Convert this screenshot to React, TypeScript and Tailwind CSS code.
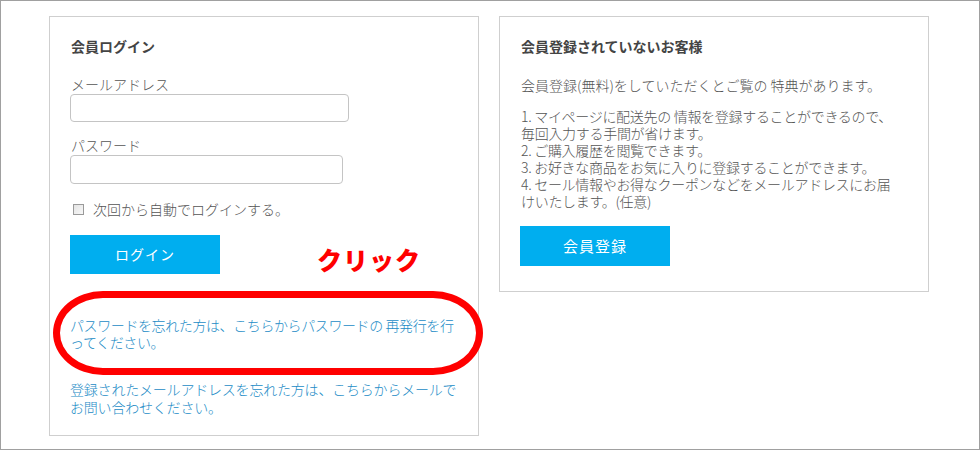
const font = { fontFamily: '"Noto Sans CJK JP", "Noto Sans", sans-serif' };

const benefits = [
  '1. マイページに配送先の 情報を登録することができるので、',
  '毎回入力する手間が省けます。',
  '2. ご購入履歴を閲覧できます。',
  '3. お好きな商品をお気に入りに登録することができます。',
  '4. セール情報やお得なクーポンなどをメールアドレスにお届',
  'けいたします。(任意)',
];

export default function App() {
  return (
    <div
      className="relative w-[980px] h-[450px] border border-[#a0a0a0] bg-white pl-[48px] pt-[15px] flex items-start gap-[20px] text-[#555] overflow-hidden"
      style={font}
    >
      {/* LOGIN */}
      <div className="w-[430px] h-[420px] border border-[#cfcfcf] px-[21px] pt-[19px] flex flex-col">
        <h2 className="text-[14px] leading-[20px] font-bold text-[#444]">会員ログイン</h2>

        <label className="mt-[18px] text-[14px] leading-[20px] font-light">メールアドレス</label>
        <div className="-ml-px w-[279px] h-[28px] rounded-[4px] border border-[#c4c4c4] bg-white" />

        <label className="mt-[13px] text-[14px] leading-[20px] font-light">パスワード</label>
        <div className="-ml-px w-[273px] h-[29px] rounded-[4px] border border-[#c4c4c4] bg-white" />

        <div className="mt-[15px] flex items-center h-[20px] text-[14px] font-light">
          <span className="ml-[2px] w-[11px] h-[11px] border border-[#9a9a9a] bg-gradient-to-br from-[#e4e4e4] to-[#f8f8f8]" />
          <span className="ml-[9px]">次回から自動でログインする。</span>
        </div>

        <button className="mt-[16px] -ml-px w-[150px] h-[39px] bg-[#00aeef] text-white text-[14px] tracking-[1px]">
          ログイン
        </button>

        <p className="mt-[43px] -ml-px text-[14px] leading-[17px] tracking-[-0.4px] text-[#1b8bc6] font-light whitespace-nowrap">
          パスワードを忘れた方は、こちらからパスワードの 再発行を行
          <br />
          ってください。
        </p>

        <p className="mt-[29px] -ml-px text-[14px] leading-[18px] tracking-[-0.2px] text-[#1b8bc6] font-light whitespace-nowrap">
          登録されたメールアドレスを忘れた方は、こちらからメールで
          <br />
          お問い合わせください。
        </p>
      </div>

      {/* REGISTER */}
      <div className="w-[430px] h-[276px] border border-[#cfcfcf] px-[21px] pt-[19px] flex flex-col">
        <h2 className="text-[14px] leading-[20px] font-bold text-[#444]">会員登録されていないお客様</h2>
        <p className="mt-[19px] text-[14px] leading-[20px] font-light whitespace-nowrap">
          会員登録(無料)をしていただくとご覧の 特典があります。
        </p>
        <div className="mt-[13px] text-[14px] leading-[17px] tracking-[-0.3px] font-light whitespace-nowrap">
          {benefits.map((line, i) => (
            <div key={i}>{line}</div>
          ))}
        </div>
        <button className="mt-[16px] -ml-px w-[150px] h-[40px] bg-[#00aeef] text-white text-[15px] tracking-[1px]">
          会員登録
        </button>
      </div>

      {/* annotation */}
      <span className="absolute left-[316px] top-[243px] text-[25px] leading-[30px] font-black text-[#ff0000] tracking-[1px]">
        クリック
      </span>
      <div className="absolute left-[52px] top-[290px] w-[430px] h-[84px] border-[7px] border-[#ff0000] rounded-[50px/42px]" />
    </div>
  );
}
